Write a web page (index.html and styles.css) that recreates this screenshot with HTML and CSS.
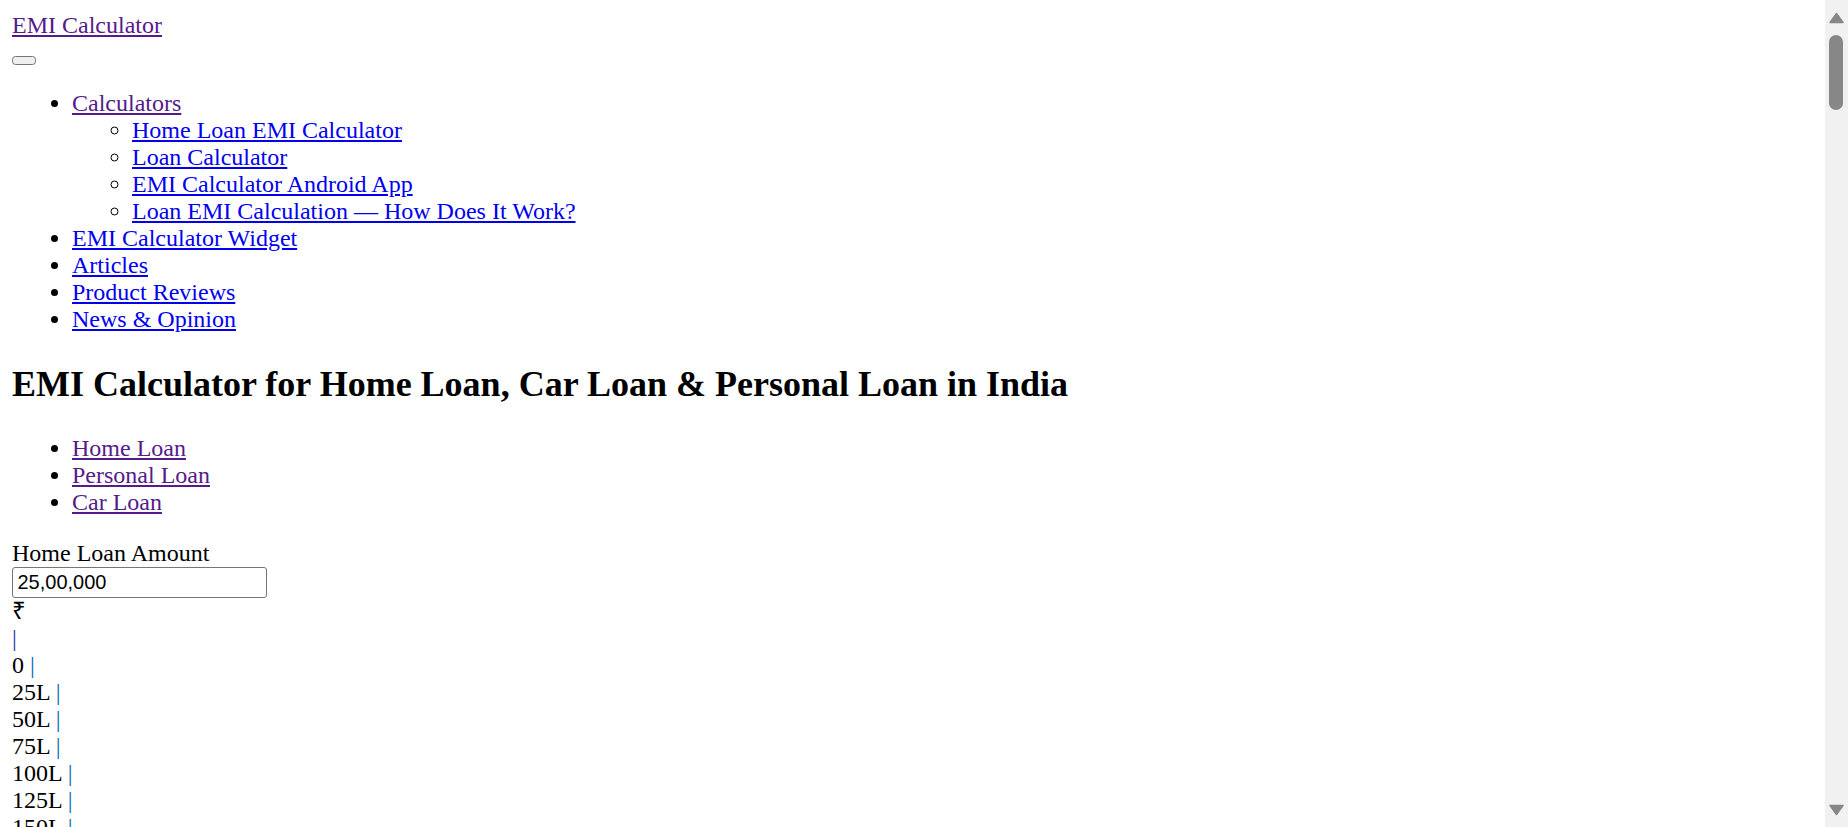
FILE: index.html
```html
<!DOCTYPE html>
<html lang="en">
<head>
<meta charset="utf-8">
<title>EMI Calculator for Home Loan, Car Loan &amp; Personal Loan in India</title>
<link rel="stylesheet" href="styles.css">
</head>
<body class="doc">
<div class="content">
<header class="site-header">
  <div class="brand"><a class="visited" href="#">EMI Calculator</a></div>
  <div class="toggle-row"><button class="nav-toggle" type="button"></button></div>
  <nav class="site-nav">
    <ul class="menu">
      <li><a class="visited" href="#">Calculators</a>
        <ul class="submenu">
          <li><a href="#">Home Loan EMI Calculator</a></li>
          <li><a href="#">Loan Calculator</a></li>
          <li><a href="#">EMI Calculator Android App</a></li>
          <li><a href="#">Loan EMI Calculation — How Does It Work?</a></li>
        </ul>
      </li>
      <li><a href="#">EMI Calculator Widget</a></li>
      <li><a href="#">Articles</a></li>
      <li><a href="#">Product Reviews</a></li>
      <li><a href="#">News &amp; Opinion</a></li>
    </ul>
  </nav>
</header>
<section class="calculator">
  <h1 class="title">EMI Calculator for Home Loan, Car Loan &amp; Personal Loan in India</h1>
  <ul class="tabs">
    <li><a class="visited" href="#">Home Loan</a></li>
    <li><a class="visited" href="#">Personal Loan</a></li>
    <li><a class="visited" href="#">Car Loan</a></li>
  </ul>
  <form class="emi-form">
    <div class="field-label"><label for="loanamount">Home Loan Amount</label></div>
    <div class="field-input"><input class="text-input" id="loanamount" type="text" value="25,00,000"></div>
    <div class="unit">₹</div>
    <div class="slider"><span class="handle">|</span></div>
    <div class="scale">
      <div>0 <span class="tick">|</span></div>
      <div>25L <span class="tick">|</span></div>
      <div>50L <span class="tick">|</span></div>
      <div>75L <span class="tick">|</span></div>
      <div>100L <span class="tick">|</span></div>
      <div>125L <span class="tick">|</span></div>
      <div>150L <span class="tick">|</span></div>
      <div>175L <span class="tick">|</span></div>
      <div>200L</div>
    </div>
    <div class="field-label"><label for="loaninterest">Interest Rate</label></div>
    <div class="field-input"><input class="text-input" id="loaninterest" type="text" value="8.5"></div>
    <div class="unit">%</div>
    <div class="slider"><span class="handle">|</span></div>
    <div class="scale">
      <div>5 <span class="tick">|</span></div>
      <div>7.5 <span class="tick">|</span></div>
      <div>10 <span class="tick">|</span></div>
      <div>12.5 <span class="tick">|</span></div>
      <div>15 <span class="tick">|</span></div>
      <div>17.5 <span class="tick">|</span></div>
      <div>20</div>
    </div>
    <div class="field-label"><label for="loanterm">Loan Tenure</label></div>
    <div class="field-input"><input class="text-input" id="loanterm" type="text" value="15"></div>
    <div class="unit"><label><input type="radio" name="termtype" checked> Yr</label> <label><input type="radio" name="termtype"> Mo</label></div>
    <div class="slider"><span class="handle">|</span></div>
    <div class="scale">
      <div>0 <span class="tick">|</span></div>
      <div>5 <span class="tick">|</span></div>
      <div>10 <span class="tick">|</span></div>
      <div>15 <span class="tick">|</span></div>
      <div>20 <span class="tick">|</span></div>
      <div>25 <span class="tick">|</span></div>
      <div>30</div>
    </div>
  </form>
  <div class="summary">
    <h4>Loan EMI</h4>
    <p>₹ <span id="emi">24,618</span></p>
    <h4>Total Interest Payable</h4>
    <p>₹ <span id="interest">19,31,320</span></p>
    <h4>Total Payment<br>(Principal + Interest)</h4>
    <p>₹ <span id="total">44,31,320</span></p>
  </div>
  <h2>Schedule showing EMI payments starting from</h2>
  <table class="schedule">
    <thead>
      <tr><th>Year</th><th>Principal<br>(A)</th><th>Interest<br>(B)</th><th>Total Payment<br>(A + B)</th><th>Balance</th><th>Loan Paid To Date</th></tr>
    </thead>
    <tbody id="schedule-body"></tbody>
  </table>
</section>
</div>
<div class="scrollbar" aria-hidden="true">
  <svg class="sb-button" width="23" height="31" viewBox="0 0 23 31"><path d="M11.5 13.5 L18 22.5 L5 22.5 Z" fill="#878787" stroke="#878787" stroke-width="1.5" stroke-linejoin="round"/></svg>
  <div class="sb-track"><div class="sb-thumb"></div></div>
  <svg class="sb-button" width="23" height="31" viewBox="0 0 23 31"><path d="M5 9.5 L18 9.5 L11.5 18.5 Z" fill="#878787" stroke="#878787" stroke-width="1.5" stroke-linejoin="round"/></svg>
</div>
<script src="script.js"></script>
</body>
</html>
```
FILE: styles.css
```css
.doc {
  margin: 0;
  background: #fff;
}
.content {
  zoom: 1.5;
  margin: 8px;
  font-family: "Liberation Serif", "Times New Roman", serif;
  font-size: 16px;
  color: #000;
}
a {
  color: #0000ee;
}
a.visited {
  color: #551a8b;
}
.menu,
.tabs {
  margin: 16px 0;
  padding-left: 40px;
  list-style: disc;
}
.submenu {
  margin: 0;
  padding-left: 40px;
  list-style: circle;
}
.title {
  font-size: 1.5em;
  font-weight: bold;
  margin: 0.83em 0;
}
.text-input {
  display: block;
  box-sizing: border-box;
  width: 170px;
  height: 21px;
  margin: 0;
  padding: 1px 3px;
  border: 1px solid #767676;
  border-radius: 2px;
  font-family: "Liberation Sans", Arial, sans-serif;
  font-size: 13.333px;
}
.unit,
.slider,
.scale {
  line-height: 18px;
}
.handle {
  color: #2a35a0;
}
.tick {
  color: #0068b4;
}
.schedule {
  border-spacing: 0;
}
.schedule td,
.schedule th {
  padding: 0;
}
.scrollbar {
  position: fixed;
  top: 0;
  right: 0;
  width: 23px;
  height: 100vh;
  background: #f1f1f1;
  display: flex;
  flex-direction: column;
}
.sb-button {
  display: block;
  flex: none;
}
.sb-track {
  flex: 1;
  padding: 4px 5px 0 4px;
}
.sb-thumb {
  height: 75px;
  border-radius: 7px;
  background: #878787;
}
```
FILE: script.js
```js
(function () {
  var P = 2500000, annual = 8.5, years = 15;
  var r = annual / 1200, n = years * 12;
  var emi = P * r * Math.pow(1 + r, n) / (Math.pow(1 + r, n) - 1);
  function inr(x) {
    var s = String(Math.round(x));
    if (s.length <= 3) return s;
    var last = s.slice(-3), rest = s.slice(0, -3);
    rest = rest.replace(/\B(?=(\d{2})+(?!\d))/g, ",");
    return rest + "," + last;
  }
  document.getElementById("emi").textContent = inr(emi);
  document.getElementById("interest").textContent = inr(emi * n - P);
  document.getElementById("total").textContent = inr(emi * n);
  var months = ["Jan", "Feb", "Mar", "Apr", "May", "Jun", "Jul", "Aug", "Sep", "Oct", "Nov", "Dec"];
  var body = document.getElementById("schedule-body");
  var bal = P, paid = 0, year = 2024;
  var html = "";
  for (var y = 0; y < years; y++) {
    var rows = "", yp = 0, yi = 0;
    for (var m = 0; m < 12; m++) {
      var i = bal * r, p = emi - i;
      bal -= p; yp += p; yi += i; paid += p;
      rows += "<tr><td>" + months[m] + "</td><td>₹ " + inr(p) + "</td><td>₹ " + inr(i) + "</td><td>₹ " + inr(emi) + "</td><td>₹ " + inr(Math.max(bal, 0)) + "</td><td>" + (paid / P * 100).toFixed(2) + "%</td></tr>";
    }
    html += "<tr><td>" + (year + y) + "</td><td>₹ " + inr(yp) + "</td><td>₹ " + inr(yi) + "</td><td>₹ " + inr(yp + yi) + "</td><td>₹ " + inr(Math.max(bal, 0)) + "</td><td>" + (paid / P * 100).toFixed(2) + "%</td></tr>" + rows;
  }
  body.innerHTML = html;
})();
```
